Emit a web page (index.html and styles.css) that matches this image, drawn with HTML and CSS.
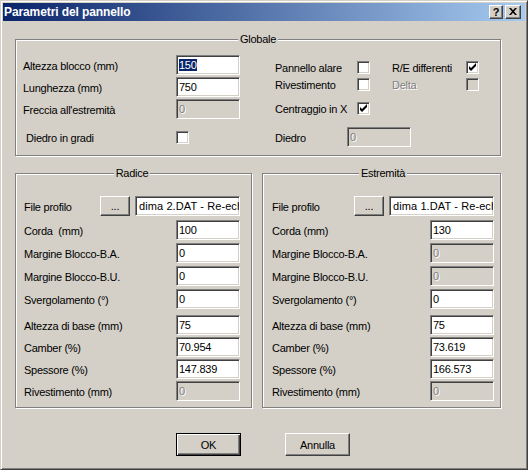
FILE: index.html
```html
<!DOCTYPE html>
<html lang="it">
<head>
<meta charset="utf-8">
<title>Parametri del pannello</title>
<link rel="stylesheet" href="styles.css">
</head>
<body>
<div class="window">
  <div class="titlebar">
    <span class="title">Parametri del pannello</span>
    <div class="capbtns">
      <span class="capbtn help">?</span>
      <span class="capbtn close"><svg width="8" height="7" viewBox="0 0 8 7"><path d="M0 0h2l2 2.2L6 0h2L5 3.5 8 7H6L4 4.8 2 7H0l3-3.5z" fill="#000"/></svg></span>
    </div>
  </div>
  <div class="client">
    <div class="group globale">
      <div class="legend">Globale</div>
      <div class="gbody">
        <div class="gleft">
          <div class="frow"><span class="lbl">Altezza blocco (mm)</span><div class="edit"><span class="sel">150</span></div></div>
          <div class="frow m2"><span class="lbl">Lunghezza (mm)</span><div class="edit">750</div></div>
          <div class="frow m2"><span class="lbl">Freccia all'estremità</span><div class="edit dis">0</div></div>
          <div class="frow m8"><span class="lbl ind">Diedro in gradi</span><span class="cb"></span></div>
        </div>
        <div class="gright">
          <div class="crow"><span class="lbl w82">Pannello alare</span><span class="cb"></span><span class="lbl w74 ml22">R/E differenti</span><span class="cb"><svg width="11" height="11" viewBox="0 0 11 11"><path d="M2 4l2 2 5-5v3l-5 5-2-2z" fill="#000"/></svg></span></div>
          <div class="crow m4"><span class="lbl w82">Rivestimento</span><span class="cb"></span><span class="lbl w74 ml22 gray">Delta</span><span class="cb dis"></span></div>
          <div class="crow m11"><span class="lbl w82">Centraggio in X</span><span class="cb"><svg width="11" height="11" viewBox="0 0 11 11"><path d="M2 4l2 2 5-5v3l-5 5-2-2z" fill="#000"/></svg></span></div>
          <div class="frow m12"><span class="lbl w72">Diedro</span><div class="edit dis">0</div></div>
        </div>
      </div>
    </div>

    <div class="pair">
      <div class="group side radice">
        <div class="legend">Radice</div>
        <div class="rows">
          <div class="prow"><span class="lbl">File profilo</span><div class="filegrp"><span class="btn small">...</span><div class="edit wide">dima 2.DAT - Re-ech</div></div></div>
          <div class="prow m4"><span class="lbl">Corda&nbsp; (mm)</span><div class="edit">100</div></div>
          <div class="prow m3"><span class="lbl">Margine Blocco-B.A.</span><div class="edit">0</div></div>
          <div class="prow m3"><span class="lbl">Margine Blocco-B.U.</span><div class="edit">0</div></div>
          <div class="prow m3"><span class="lbl">Svergolamento (°)</span><div class="edit">0</div></div>
          <div class="prow m6"><span class="lbl">Altezza di base (mm)</span><div class="edit">75</div></div>
          <div class="prow m2"><span class="lbl">Camber (%)</span><div class="edit">70.954</div></div>
          <div class="prow m2"><span class="lbl">Spessore (%)</span><div class="edit">147.839</div></div>
          <div class="prow m2"><span class="lbl">Rivestimento (mm)</span><div class="edit dis">0</div></div>
        </div>
      </div>
      <div class="group side estremita">
        <div class="legend">Estremità</div>
        <div class="rows">
          <div class="prow"><span class="lbl">File profilo</span><div class="filegrp"><span class="btn small">...</span><div class="edit wide">dima 1.DAT - Re-ech</div></div></div>
          <div class="prow m4"><span class="lbl">Corda (mm)</span><div class="edit">130</div></div>
          <div class="prow m3"><span class="lbl">Margine Blocco-B.A.</span><div class="edit dis">0</div></div>
          <div class="prow m3"><span class="lbl">Margine Blocco-B.U.</span><div class="edit dis">0</div></div>
          <div class="prow m3"><span class="lbl">Svergolamento (°)</span><div class="edit">0</div></div>
          <div class="prow m6"><span class="lbl">Altezza di base (mm)</span><div class="edit">75</div></div>
          <div class="prow m2"><span class="lbl">Camber (%)</span><div class="edit">73.619</div></div>
          <div class="prow m2"><span class="lbl">Spessore (%)</span><div class="edit">166.573</div></div>
          <div class="prow m2"><span class="lbl">Rivestimento (mm)</span><div class="edit dis">0</div></div>
        </div>
      </div>
    </div>

    <div class="actions">
      <span class="btn default">OK</span>
      <span class="btn">Annulla</span>
    </div>
  </div>
</div>
</body>
</html>
```

FILE: styles.css
```css
* { box-sizing: border-box; }
html, body { margin: 0; padding: 0; }
body {
  background: #d4d0c8;
  font-family: "Liberation Sans", Arial, sans-serif;
  font-size: 11px;
  letter-spacing: -0.25px;
  color: #000;
}
.window {
  width: 528px;
  height: 470px;
  background: #d4d0c8;
  border: 1px solid;
  border-color: #d4d0c8 #404040 #404040 #d4d0c8;
  box-shadow: inset 1px 1px 0 #fff, inset -1px -1px 0 #808080;
  padding: 2px;
  display: flex;
  flex-direction: column;
}
.titlebar {
  height: 18px;
  background: linear-gradient(to right, #0a246a, #a6caf0);
  display: flex;
  align-items: center;
  padding: 0 4px 0 1px;
}
.title {
  color: #fff;
  font-weight: bold;
  font-size: 12px;
  letter-spacing: -0.1px;
}
.capbtns { margin-left: auto; display: flex; gap: 2px; }
.capbtn {
  height: 14px;
  background: #d4d0c8;
  border: 1px solid;
  border-color: #fff #404040 #404040 #fff;
  box-shadow: inset -1px -1px 0 #808080;
  display: flex;
  align-items: center;
  justify-content: center;
}
.help { width: 14px; font-weight: bold; font-size: 11px; line-height: 12px; letter-spacing: 0; padding-bottom: 1px; }
.close { width: 16px; padding-bottom: 1px; }
.close svg { display: block; }

.client { display: flex; flex-direction: column; padding-left: 12px; }

.group {
  border: 1px solid #808080;
  box-shadow: inset 1px 1px 0 #fff, 1px 1px 0 #fff;
}
.legend {
  width: max-content;
  height: 13px;
  line-height: 13px;
  margin: -7px auto -6px;
  padding: 0 2px;
  background: #d4d0c8;
}
.globale { width: 486px; height: 117px; margin-top: 18px; }
.gbody { display: flex; padding-left: 7px; }
.gleft { width: 217px; padding-top: 15px; display: flex; flex-direction: column; }
.gright { margin-left: 35px; padding-top: 21px; display: flex; flex-direction: column; }

.frow { display: flex; align-items: center; height: 20px; }
.gleft .lbl { width: 153px; }
.lbl { white-space: nowrap; padding-top: 1px; }
.ind { padding-left: 3px; }
.crow { display: flex; align-items: center; height: 13px; }
.w82 { width: 82px; }
.w74 { width: 74px; }
.w72 { width: 72px; }
.ml22 { margin-left: 22px; }
.gray { color: #808080; text-shadow: 1px 1px 0 #fff; }

.m2 { margin-top: 2px; }
.m3 { margin-top: 3px; }
.m4 { margin-top: 4px; }
.m6 { margin-top: 6px; }
.m8 { margin-top: 8px; }
.m11 { margin-top: 11px; }
.m12 { margin-top: 12px; }

.edit {
  width: 64px;
  height: 20px;
  flex: none;
  background: #fff;
  border: 1px solid;
  border-color: #808080 #fff #fff #808080;
  box-shadow: inset 1px 1px 0 #404040, inset -1px -1px 0 #d4d0c8;
  padding: 0 2px 0 2px;
  line-height: 18px;
  white-space: nowrap;
  overflow: hidden;
}
.edit.wide { width: 105px; padding-left: 3px; letter-spacing: 0.1px; }
.edit.dis { background: #d4d0c8; color: #808080; text-shadow: 1px 1px 0 #fff; }
.sel { background: #0a246a; color: #fff; }

.cb {
  width: 13px;
  height: 13px;
  flex: none;
  background: #fff;
  border: 1px solid;
  border-color: #808080 #fff #fff #808080;
  box-shadow: inset 1px 1px 0 #404040, inset -1px -1px 0 #d4d0c8;
}
.cb svg { display: block; }
.cb.dis { background: #d4d0c8; }

.pair { display: flex; gap: 10px; margin-top: 17px; }
.side { height: 235px; }
.radice { width: 237px; padding: 0 11px 0 8px; }
.estremita { width: 239px; padding: 0 6px 0 9px; }
.rows { padding-top: 22px; display: flex; flex-direction: column; }
.prow { display: flex; align-items: center; justify-content: space-between; height: 20px; }
.filegrp { display: flex; gap: 5px; }

.btn {
  display: flex;
  align-items: center;
  justify-content: center;
  width: 65px;
  height: 23px;
  background: #d4d0c8;
  border: 1px solid;
  border-color: #fff #404040 #404040 #fff;
  box-shadow: inset -1px -1px 0 #808080;
}
.btn.small { width: 30px; height: 20px; }
.btn.default {
  border: 1px solid #000;
  box-shadow: inset 1px 1px 0 #fff, inset -1px -1px 0 #404040, inset -2px -2px 0 #808080;
}
.actions { display: flex; gap: 44px; margin-top: 25px; padding-left: 161px; }
```
